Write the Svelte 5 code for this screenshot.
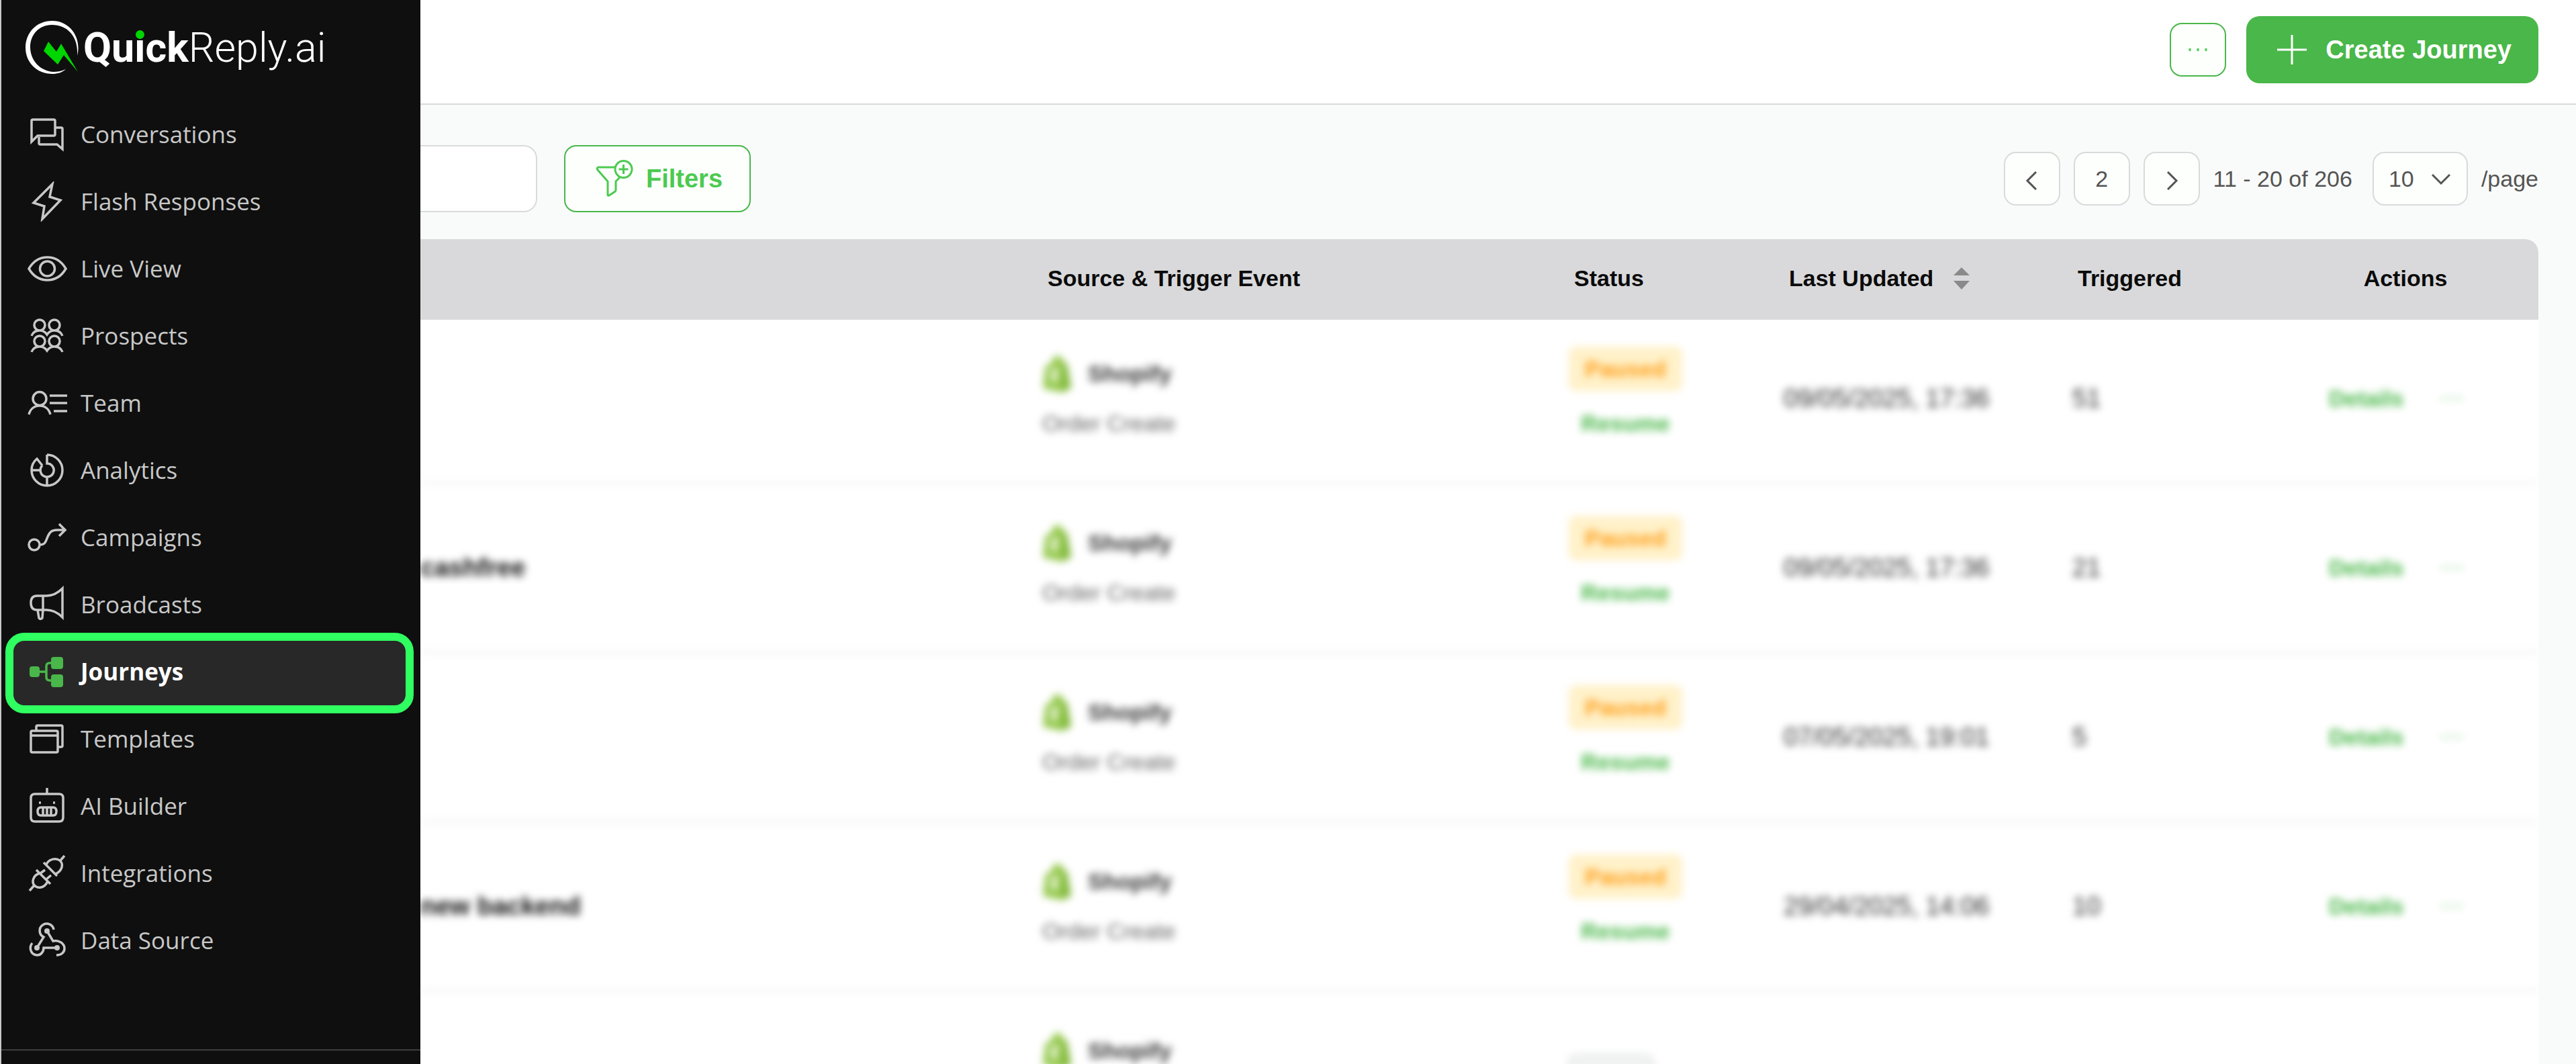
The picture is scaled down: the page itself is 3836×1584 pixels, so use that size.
<script>
  let search = "";
  let page = 2;
  let pageSize = 10;

  const menu = [
    { label: "Conversations", icon: "chat" },
    { label: "Flash Responses", icon: "flash" },
    { label: "Live View", icon: "eye" },
    { label: "Prospects", icon: "people" },
    { label: "Team", icon: "team" },
    { label: "Analytics", icon: "chart" },
    { label: "Campaigns", icon: "route" },
    { label: "Broadcasts", icon: "horn" },
    { label: "Journeys", icon: "journey", active: true },
    { label: "Templates", icon: "windows" },
    { label: "AI Builder", icon: "bot" },
    { label: "Integrations", icon: "plug" },
    { label: "Data Source", icon: "webhook" },
  ];

  const icons = {
    chat: "M7 41V10q0-2 2-2h31q2 0 2 2v20q0 2-2 2H16zM43 20h8q2 0 2 2v30l-8-7H20q-2 0-2-2V34",
    flash: "M38 4L34 23l16 5L23 56l3-19-16-5z",
    eye: "M3 30C10 18 19 13 30.5 13S51 18 58 30C51 42 42 47 30.5 47S10 42 3 30zM19.5 30a11 11 0 1 0 22 0a11 11 0 1 0-22 0",
    people:
      "M11 14a8 8 0 1 0 16 0a8 8 0 1 0-16 0M33 14a8 8 0 1 0 16 0a8 8 0 1 0-16 0M7 30q3-8 12-8 7 0 11 6 4-6 11-6 9 0 12 8M11 38a8 8 0 1 0 16 0a8 8 0 1 0-16 0M33 38a8 8 0 1 0 16 0a8 8 0 1 0-16 0M7 54q3-8 12-8 7 0 11 6 4-6 11-6 9 0 12 8",
    team: "M9 23.5a10 10 0 1 0 20 0a10 10 0 1 0-20 0M3 47c2-8 8-13 16-13s14 5 16 13M34 19h26M34 30h26M40 42h20",
    chart:
      "M30 7a23 23 0 1 1-23 23c0-7 3-13 8-17l8 10M7 30h13M30 7v13a10 10 0 1 1-7 3M30 40v13",
    route:
      "M3 41a8 8 0 1 0 16 0a8 8 0 1 0-16 0M19 41c9 0 9-5 12-12s6-10 14-10h12M48 10l9 9-9 9",
    horn: "M53 6v43c-6-6-14-11-24-11H15q-9 0-9-10.5T15 17h14C39 17 47 12 53 6zM24 17v21M16 38l2 12q2 3 5 0l1-12",
    windows:
      "M8 18h36q2 0 2 2v28q0 2-2 2H8q-2 0-2-2V20q0-2 2-2zM6 25h40M14 18v-6q0-2 2-2h35q2 0 2 2v28q0 2-2 2h-5",
    bot: "M12 12h36q6 0 6 6v29q0 6-6 6H12q-6 0-6-6V18q0-6 6-6zM30 3v9M18 25h3M39 25h3M21 32h18q5 0 5 6t-5 6H21q-5 0-5-6t5-6zM24 32v12M30 32v12M36 32v12",
    plug: "M56 4l-6 7M25 14l20 20M29 17c4-9 15-10 20-6 6 5 4 15-6 20M4 56l7-8M14 25l21 21M19 30c-10 3-12 13-8 18 5 5 15 5 20-6M19 31l8-6M29 39l7-6",
    webhook:
      "M40 14a10.5 10.5 0 1 0-15 11L15 41M30 16l9 15c8-2 17 3 17 11 0 6-5 10-12 10M8 34c-5 6-3 17 7 18 6 0 10-5 10-11h20",
  };

  const rows = [
    { name: "", status: "Paused", updated: "09/05/2025, 17:36", triggered: "51" },
    { name: "cashfree", status: "Paused", updated: "09/05/2025, 17:36", triggered: "21" },
    { name: "", status: "Paused", updated: "07/05/2025, 19:01", triggered: "5" },
    { name: "new backend", status: "Paused", updated: "29/04/2025, 14:06", triggered: "10" },
    { name: "", status: "", updated: "", triggered: "" },
  ];
</script>

<div class="app">
  <aside>
    <a class="logo" href="#home">
      <svg viewBox="0 0 84 84" aria-hidden="true">
        <path
          fill="#fff"
          d="M79 54C86 27 68 2 42 2 18 2 2 20 2 42s17 39 40 39c8 0 14-2 20-7-7 3-13 4-18 4C24 77 9 61 9 41 9 23 22 8 41 8c25 0 40 19 38 46z"
        />
        <path fill="#00d600" d="M36 33l12 15 7-12 25 42-21-25-9 14-21-20z" />
      </svg>
      <span class="brand">
        <b>Qu<span class="dot">i</span>ck</b><span class="thin">Reply.ai</span>
      </span>
    </a>
    <nav>
      {#each menu as item}
        <a
          href="#{item.icon}"
          class:active={item.active}
          aria-current={item.active ? "page" : undefined}
        >
          <svg viewBox="0 0 60 60" aria-hidden="true">
            {#if item.icon === "journey"}
              <path d="M16 30h13M37 17h-3q-5 0-5 5v16q0 5 5 5h3" />
              <g fill="currentColor" stroke="none">
                <rect x="4" y="22" width="15" height="16" rx="4" />
                <rect x="36" y="8" width="18" height="18" rx="4" />
                <rect x="36" y="34" width="18" height="19" rx="4" />
              </g>
            {:else}
              <path d={icons[item.icon]} />
            {/if}
            {#if item.icon === "webhook"}
              <g fill="currentColor" stroke="none">
                <circle cx="30" cy="16" r="4" />
                <circle cx="15" cy="41" r="4" />
                <circle cx="45" cy="41" r="4" />
              </g>
            {/if}
          </svg>
          <span>{item.label}</span>
        </a>
      {/each}
    </nav>
    <div class="account"></div>
  </aside>

  <main>
    <header>
      <button class="outline more" aria-label="More options">
        <svg class="dots" viewBox="0 0 30 6" aria-hidden="true">
          <path d="M3 1v4M15 1v4M27 1v4" />
        </svg>
      </button>
      <button class="create">
        <svg viewBox="0 0 44 44" aria-hidden="true"><path d="M22 0v44M0 22h44" /></svg>
        Create Journey
      </button>
    </header>

    <div class="toolbar">
      <input class="search" type="text" aria-label="Search journeys" bind:value={search} />
      <button class="outline filters">
        <svg viewBox="0 0 60 60" aria-hidden="true">
          <path
            d="M32 13H7q-3 1-1 4L21 34v20q0 2 2 1l9-6q1-1 1-2V34l6-6M57 16a12.5 12.5 0 1 0-25 0a12.5 12.5 0 1 0 25 0M44.5 9v14M37.5 16h14"
          />
        </svg>
        Filters
      </button>

      <div class="pager">
        <button class="box" aria-label="Previous page">
          <svg viewBox="0 0 28 28" aria-hidden="true"><path d="M20 1L7 14l13 13" /></svg>
        </button>
        <input class="box" type="text" aria-label="Page number" bind:value={page} />
        <button class="box" aria-label="Next page">
          <svg viewBox="0 0 28 28" aria-hidden="true"><path d="M8 1l13 13L8 27" /></svg>
        </button>
        <span class="range">11 - 20 of 206</span>
        <div class="size">
          <select class="box" id="page-size" bind:value={pageSize}>
            <option value={10}>10</option>
            <option value={20}>20</option>
            <option value={50}>50</option>
          </select>
          <svg viewBox="0 0 28 28" aria-hidden="true"><path d="M1 8l13 13L27 8" /></svg>
        </div>
        <label for="page-size">/page</label>
      </div>
    </div>

    <div class="list">
      <table>
        <colgroup>
          <col />
          <col class="c-source" />
          <col class="c-narrow" />
          <col class="c-date" />
          <col class="c-narrow" />
          <col class="c-actions" />
        </colgroup>
        <thead>
          <tr>
            <th aria-label="Journey"></th>
            <th>Source &amp; Trigger Event</th>
            <th>Status</th>
            <th>
              <span class="sortable">
                Last Updated
                <svg viewBox="0 0 24 36" aria-hidden="true">
                  <path d="M12 2l12 12H0zM12 35L0 22h24z" />
                </svg>
              </span>
            </th>
            <th>Triggered</th>
            <th class="center">Actions</th>
          </tr>
        </thead>
        <tbody>
          {#each rows as row}
            <tr>
              <td class="name">{row.name}</td>
              <td>
                <div class="source">
                  <svg viewBox="0 0 44 56" aria-hidden="true">
                    <path fill="#95c94e" d="M5 17l8-3C15 5 20 1 24 2c4 0 6 4 7 8l6 4 6 36-14 6-28-6z" />
                    <path fill="#74ad2f" d="M31 10l6 4 6 36-14 6z" opacity=".6" />
                    <path
                      d="M25 25c-8-4-12 2-8 6s6 8-3 6"
                      fill="none"
                      stroke="#fff"
                      stroke-width="5"
                    />
                  </svg>
                  Shopify
                </div>
                <div class="event">Order Create</div>
              </td>
              <td>
                <div class="status">
                  {#if row.status}
                    <span class="pill">{row.status}</span>
                    <button class="link resume">Resume</button>
                  {:else}
                    <span class="pill empty"></span>
                  {/if}
                </div>
              </td>
              <td>{row.updated}</td>
              <td>{row.triggered}</td>
              <td>
                {#if row.status}
                  <div class="actions">
                    <button class="link">Details</button>
                    <button class="link" aria-label="Row options">
                      <svg class="dots" viewBox="0 0 30 6" aria-hidden="true">
                        <path d="M3 1v4M15 1v4M27 1v4" />
                      </svg>
                    </button>
                  </div>
                {/if}
              </td>
            </tr>
          {/each}
        </tbody>
      </table>
    </div>
  </main>
</div>

<style>
  :global(body) {
    margin: 0;
    overflow: hidden;
  }

  .app {
    --green: #49b749;
    --line: #d9dada;
    display: flex;
    height: 100vh;
    box-sizing: border-box;
    border-left: 2px solid #c8c8c8;
    overflow: hidden;
    background: #f9fbfa;
    color: #545454;
    font: 34px/44px "Liberation Sans", Arial, sans-serif;
  }

  button,
  input,
  select {
    box-sizing: border-box;
    margin: 0;
    padding: 0;
    border: none;
    background: none;
    color: inherit;
    font: inherit;
  }

  svg {
    flex: none;
    fill: none;
    stroke: currentColor;
    stroke-width: 3;
  }

  aside {
    flex: none;
    display: flex;
    flex-direction: column;
    width: 624px;
    background: #0f0f0f;
    color: #c8c8c8;
    font-family: "Open Sans", "Noto Sans", sans-serif;
  }

  aside a {
    display: flex;
    align-items: center;
    color: inherit;
    text-decoration: none;
  }

  .logo {
    height: 150px;
    box-sizing: border-box;
    padding: 0 0 8px 34px;
  }

  .logo svg {
    width: 84px;
    height: 84px;
    stroke: none;
  }

  .brand {
    margin-left: 4px;
    color: #fff;
    font: 61px/80px Roboto, sans-serif;
  }

  .brand b {
    font-weight: 700;
  }

  .thin {
    font-weight: 300;
  }

  .dot {
    position: relative;
  }

  .dot::after {
    content: "";
    position: absolute;
    top: 10px;
    left: 2px;
    width: 13px;
    height: 13px;
    border-radius: 50%;
    background: #00d600;
  }

  nav {
    flex: 1;
  }

  nav a {
    position: relative;
    z-index: 0;
    gap: 20px;
    height: 100px;
    padding-left: 38px;
    font-size: 35px;
  }

  nav svg {
    width: 60px;
    height: 60px;
    stroke-width: 3.5;
  }

  nav a.active {
    color: #fff;
    font-weight: 700;
  }

  nav .active svg {
    color: var(--green);
  }

  nav .active::before {
    content: "";
    position: absolute;
    z-index: -1;
    inset: -8px 10px -12px 6px;
    border: 12px solid #2fff60;
    border-radius: 28px;
    background: #282828;
  }

  .account {
    height: 20px;
    border-top: 2px solid #3d3d3d;
  }

  main {
    flex: 1;
    min-width: 0;
  }

  header {
    display: flex;
    align-items: center;
    justify-content: flex-end;
    gap: 30px;
    height: 148px;
    padding: 0 56px 6px 0;
    border-bottom: 2px solid var(--line);
    background: #fff;
  }

  .outline {
    border: 2px solid var(--green);
    border-radius: 18px;
    background: #fdfffd;
    color: #4cca50;
  }

  .dots {
    display: block;
    width: 30px;
    height: 6px;
  }

  .more {
    display: grid;
    place-items: center;
    width: 84px;
    height: 80px;
  }

  .create,
  .filters {
    display: flex;
    align-items: center;
    height: 100px;
    font-size: 38px;
    font-weight: 700;
  }

  .create {
    gap: 28px;
    padding: 0 40px 0 46px;
    border-radius: 20px;
    background: var(--green);
    color: #fff;
  }

  .create svg {
    width: 44px;
    height: 44px;
  }

  .toolbar {
    display: flex;
    align-items: center;
    padding: 60px 56px 40px 0;
  }

  .search {
    width: 174px;
    height: 100px;
    margin-right: 40px;
    padding: 0 20px;
    border: 2px solid var(--line);
    border-left: none;
    border-radius: 0 20px 20px 0;
    background: #fff;
  }

  .filters {
    gap: 18px;
    padding: 0 40px 0 42px;
  }

  .filters svg {
    width: 60px;
    height: 60px;
  }

  .pager {
    display: flex;
    align-items: center;
    gap: 20px;
    margin-left: auto;
  }

  .box {
    width: 84px;
    height: 80px;
    border: 2px solid var(--line);
    border-radius: 18px;
    background: #fdfffd;
    text-align: center;
  }

  .pager svg {
    width: 28px;
    height: 28px;
    vertical-align: middle;
  }

  .range {
    margin-right: 10px;
  }

  .size {
    display: grid;
    align-items: center;
  }

  .size > * {
    grid-area: 1 / 1;
  }

  .size select {
    width: 142px;
    padding-left: 22px;
    appearance: none;
    text-align: left;
  }

  .size svg {
    justify-self: end;
    margin-right: 26px;
    pointer-events: none;
  }

  .list {
    margin-right: 56px;
    border-radius: 0 20px 0 0;
    overflow: hidden;
    background: #fff;
  }

  table {
    width: 100%;
    table-layout: fixed;
    border-collapse: separate;
    border-spacing: 0;
  }

  .c-source {
    width: 784px;
  }

  .c-narrow {
    width: 320px;
  }

  .c-date {
    width: 430px;
  }

  .c-actions {
    width: 396px;
  }

  th {
    height: 120px;
    box-sizing: border-box;
    padding: 0 0 4px 30px;
    background: #d9d9db;
    color: #0b0b0b;
    text-align: left;
  }

  th.center {
    padding-left: 0;
    text-align: center;
  }

  .sortable {
    display: flex;
    align-items: center;
    gap: 30px;
  }

  .sortable svg {
    width: 24px;
    height: 36px;
    fill: #8a8a8a;
    stroke: none;
  }

  tbody {
    filter: blur(6px);
  }

  td {
    height: 252px;
    box-sizing: border-box;
    padding: 0 0 0 22px;
    border-bottom: 2px solid #e4e4e4;
    color: #333;
    font-size: 38px;
  }

  tr:first-child td {
    height: 244px;
    padding-bottom: 8px;
  }

  td.name {
    padding-left: 0;
    color: #111;
    font-weight: 700;
  }

  .source {
    display: flex;
    align-items: center;
    gap: 24px;
    height: 60px;
    margin-bottom: 14px;
    font-size: 34px;
    font-weight: 700;
  }

  .source svg {
    width: 44px;
    height: 56px;
    stroke: none;
  }

  .event {
    height: 60px;
    color: #666;
    font-size: 34px;
    line-height: 60px;
  }

  .status {
    display: inline-flex;
    flex-direction: column;
    align-items: center;
    gap: 8px;
    vertical-align: middle;
    font-size: 34px;
  }

  .pill {
    padding: 11px 24px;
    border-radius: 10px;
    background: #fff1c9;
    color: #ff9f1a;
    font-weight: 700;
  }

  .pill.empty {
    width: 74px;
    height: 36px;
    border: 2px solid #d5d7d6;
    background: #f1f3f2;
  }

  .link {
    color: var(--green);
    font-size: 34px;
    font-weight: 700;
  }

  .resume {
    height: 80px;
  }

  .actions {
    display: flex;
    align-items: center;
    gap: 56px;
    padding-left: 62px;
  }
</style>
